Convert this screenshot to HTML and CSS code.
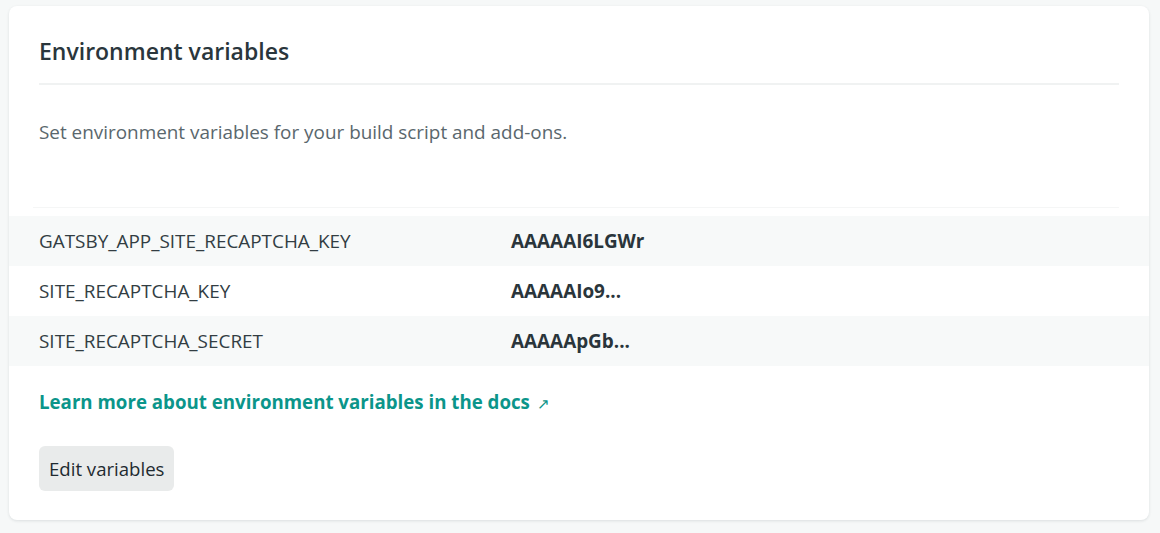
FILE: index.html
```html
<!DOCTYPE html>
<html lang="en">
<head>
<meta charset="utf-8">
<title>Environment variables</title>
<link rel="stylesheet" href="styles.css">
</head>
<body>
<section class="card">
  <header class="card-head">
    <h2 class="title">Environment variables</h2>
  </header>
  <p class="desc">Set environment variables for your build script and add-ons.</p>
  <div class="table">
    <div class="thead"></div>
    <div class="row alt">
      <span class="key">GATSBY_APP_SITE_RECAPTCHA_KEY</span>
      <span class="val">AAAAAI6LGWr</span>
    </div>
    <div class="row">
      <span class="key">SITE_RECAPTCHA_KEY</span>
      <span class="val">AAAAAIo9...</span>
    </div>
    <div class="row alt">
      <span class="key">SITE_RECAPTCHA_SECRET</span>
      <span class="val">AAAAApGb...</span>
    </div>
  </div>
  <a class="doc-link" href="#">Learn more about environment variables in the docs <span class="arrow">↗</span></a>
  <div class="actions">
    <button class="btn" type="button">Edit variables</button>
  </div>
</section>
</body>
</html>
```

FILE: styles.css
```css
html, body {
  margin: 0;
  padding: 0;
}
body {
  background: #f6f8f8;
  font-family: "Open Sans", "Noto Sans", sans-serif;
  color: #2e3a40;
  padding: 6px 11px 0 9px;
  height: 533px;
  box-sizing: border-box;
}
.card {
  background: #ffffff;
  border-radius: 8px;
  box-shadow: 0 1px 3px rgba(30, 50, 60, 0.12);
  height: 514px;
  box-sizing: border-box;
  padding-top: 30px;
  display: flex;
  flex-direction: column;
}
.card-head {
  margin: 0 30px;
  border-bottom: 2px solid #f0f2f2;
  padding-bottom: 17px;
}
.title {
  margin: 0;
  font-size: 23px;
  line-height: 30px;
  font-weight: 600;
  color: #2a363c;
}
.desc {
  margin: 34px 30px 0;
  font-size: 18.9px;
  line-height: 26px;
  color: #5a676d;
}
.table {
  margin-top: 62px;
  display: flex;
  flex-direction: column;
}
.thead {
  height: 1px;
  background: #f5f6f6;
  margin: 0 30px 8px 24px;
}
.row {
  height: 50px;
  display: grid;
  grid-template-columns: 472px 1fr;
  align-items: center;
  padding: 0 30px;
  font-size: 18.9px;
}
.row.alt {
  background: #f7f9f9;
}
.key {
  color: #323d43;
}
.val {
  font-weight: 700;
  color: #2a353b;
}
.doc-link {
  margin: 24px 30px 0;
  align-self: flex-start;
  color: #0b958a;
  font-weight: 700;
  font-size: 18.7px;
  line-height: 24px;
  text-decoration: none;
}
.arrow {
  font-weight: 400;
  font-size: 15px;
  margin-left: 2px;
}
.actions {
  margin: 31px 30px 0;
}
.btn {
  font-family: inherit;
  font-size: 18.6px;
  color: #1e2a30;
  background: #e9ebeb;
  border: none;
  border-radius: 6px;
  height: 45px;
  padding: 0 10px;
}
```
